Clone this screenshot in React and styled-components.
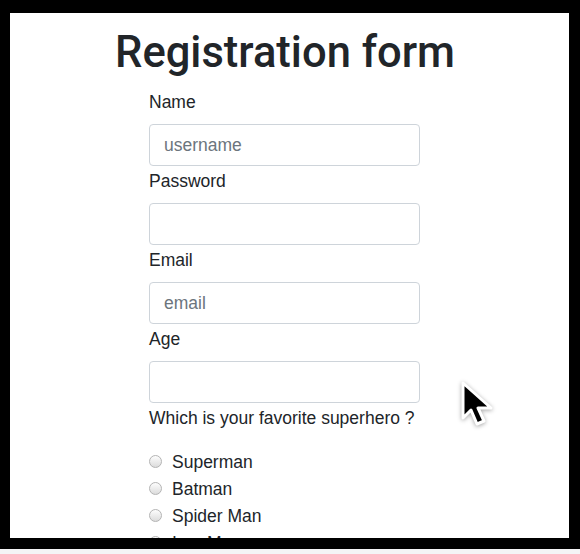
import styled, {createGlobalStyle} from "styled-components";

const Global = createGlobalStyle`
  html, body {
    margin: 0;
    padding: 0;
    background: #000;
  }
  body {
    font-family: "Liberation Sans", Arial, sans-serif;
    color: #212529;
  }
`;

const Page = styled.div`
  width: 580px;
  height: 554px;
  display: flex;
  flex-direction: column;
  overflow: hidden;
`;

const Frame = styled.div`
  height: 549px;
  box-sizing: border-box;
  padding: 13px 11px 11px 10px;
  background: #000;
`;

const Strip = styled.div`
  flex: 1;
  background: #f4f4f6;
`;

const Panel = styled.div`
  position: relative;
  height: 100%;
  background: #fff;
  overflow: hidden;
`;

const Title = styled.h1`
  margin: 0 0 9px;
  padding: 13px 9px 0 0;
  font-family: Roboto, "Liberation Sans", sans-serif;
  font-weight: 500;
  font-size: 43.5px;
  line-height: 54px;
  text-align: center;
  color: #212529;
`;

const Form = styled.form`
  width: 271px;
  margin: 0 0 0 139px;
  display: flex;
  flex-direction: column;
`;

const Label = styled.label`
  font-size: 17.5px;
  line-height: 26px;
  margin-bottom: ${(p) => (p.$gap ? p.$gap : 9)}px;
`;

const Input = styled.input`
  box-sizing: border-box;
  height: 42px;
  width: 100%;
  margin: 0 0 2px;
  padding: 0 14px;
  border: 1px solid #ced4da;
  border-radius: 4px;
  font-family: "Liberation Sans", Arial, sans-serif;
  font-size: 17.5px;
  color: #495057;
  outline: none;
  &::placeholder {
    color: #6c757d;
  }
`;

const Option = styled.label`
  display: flex;
  align-items: center;
  height: 27px;
  font-size: 17.5px;
`;

const Radio = styled.input`
  appearance: none;
  box-sizing: border-box;
  width: 13px;
  height: 13px;
  margin: -3px 10px 0 0;
  border-radius: 50%;
  border: 1px solid #b4b4b4;
  background: linear-gradient(#fdfdfd, #dcdcdc);
`;

const Cursor = styled.svg`
  position: absolute;
  left: 449px;
  top: 366px;
  filter: drop-shadow(0 1px 2px rgba(0, 0, 0, 0.35));
`;

const heroes = ["Superman", "Batman", "Spider Man", "Iron Man"];

const App = () => {
  return (
    <Page>
      <Global />
      <Frame>
        <Panel>
          <Title>Registration form</Title>
          <Form>
            <Label>Name</Label>
            <Input placeholder="username" />
            <Label>Password</Label>
            <Input type="password" />
            <Label>Email</Label>
            <Input placeholder="email" />
            <Label>Age</Label>
            <Input />
            <Label $gap={18}>Which is your favorite superhero ?</Label>
            {heroes.map((h) => (
              <Option key={h}>
                <Radio type="radio" name="hero" />
                {h}
              </Option>
            ))}
          </Form>
          <Cursor width="40" height="52" viewBox="-4 -4 40 52">
            <path
              d="M0 0 L0 35 L8 27 L14 41 L21 38 L15 25 L28 25 Z"
              fill="#000"
              stroke="#fff"
              strokeWidth="3"
              strokeLinejoin="round"
            />
          </Cursor>
        </Panel>
      </Frame>
      <Strip />
    </Page>
  );
};

export default App;
